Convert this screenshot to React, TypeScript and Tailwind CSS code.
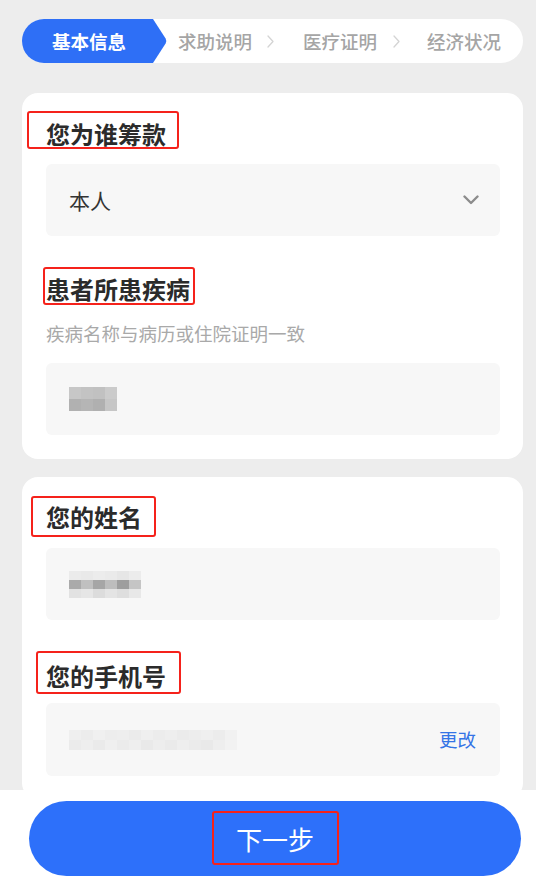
import React from 'react';

const font = { fontFamily: '"Noto Sans CJK SC", "Noto Sans", sans-serif' };

const Chevron = () => (
  <svg width="7" height="13" viewBox="0 0 7 13" fill="none" className="shrink-0">
    <path d="M1 1 L6 6.5 L1 12" stroke="#d4d4d4" strokeWidth="1.3" strokeLinecap="round" strokeLinejoin="round" />
  </svg>
);

// red annotation frame laid over a heading
const Mark = ({ className }: { className: string }) => (
  <span className={`pointer-events-none absolute rounded-[3px] border-[2.5px] border-[#f5221b] ${className}`} />
);

// pixelated (mosaic) censored value
const Mosaic = ({ rows, cell }: { rows: string[][]; cell: string }) => (
  <div className="flex flex-col">
    {rows.map((row, i) => (
      <div key={i} className="flex">
        {row.map((c, j) => (
          <div key={j} className={cell} style={{ backgroundColor: c }} />
        ))}
      </div>
    ))}
  </div>
);

const Heading = ({ text, mark }: { text: string; mark: string }) => (
  <div className="relative self-start">
    <h2 className="text-[24px] leading-[24px] font-bold text-[#2b2b2b]">{text}</h2>
    <Mark className={mark} />
  </div>
);

export default function App() {
  return (
    <div className="min-h-screen w-full bg-[#ededed] pl-[22px] pr-[13px] pt-[19px] pb-[100px]" style={font}>
      {/* Steps */}
      <div className="flex h-[44px] items-center rounded-full bg-white">
        <div className="relative flex h-full w-[145px] shrink-0 items-center pl-[30px]">
          <svg className="absolute inset-0" width="145" height="44" viewBox="0 0 145 44">
            <path
              d="M22 0 H131 L143.6 19.6 Q145 22 143.6 24.4 L131 44 H22 A22 22 0 0 1 22 0 Z"
              fill="#2e6ff6"
            />
          </svg>
          <span className="relative text-[18.5px] font-bold leading-none text-white">基本信息</span>
        </div>
        <span className="ml-[11px] text-[18.5px] font-medium leading-none text-[#a5a5a5]">求助说明</span>
        <span className="ml-[15px]"><Chevron /></span>
        <span className="ml-[29px] text-[18.5px] font-medium leading-none text-[#a5a5a5]">医疗证明</span>
        <span className="ml-[16px]"><Chevron /></span>
        <span className="ml-[27px] text-[18.5px] font-medium leading-none text-[#a5a5a5]">经济状况</span>
      </div>

      {/* Card 1 */}
      <div className="mt-[30px] flex flex-col rounded-[16px] bg-white pl-[24px] pr-[23px] pt-[29px] pb-[24px]">
        <Heading text="您为谁筹款" mark="-left-[19px] -top-[11px] h-[38px] w-[152px]" />
        <div className="mt-[18px] flex h-[72px] items-center justify-between rounded-[6px] bg-[#f7f7f7] pl-[23px] pr-[21px]">
          <span className="text-[21px] leading-none text-[#333333]">本人</span>
          <svg width="16" height="10" viewBox="0 0 16 10" fill="none">
            <path d="M1.5 1.5 L8 8 L14.5 1.5" stroke="#8c8c8c" strokeWidth="2.4" strokeLinecap="round" strokeLinejoin="round" />
          </svg>
        </div>

        <div className="mt-[41px]">
          <Heading text="患者所患疾病" mark="-left-[3px] -top-[10px] h-[38px] w-[152px]" />
        </div>
        <p className="mt-[23px] text-[18.5px] leading-[19px] text-[#a9a9a9]">疾病名称与病历或住院证明一致</p>
        <div className="mt-[20px] flex h-[72px] items-center rounded-[6px] bg-[#f7f7f7] pl-[23px]">
          <Mosaic
            cell="h-[12px] w-[12px]"
            rows={[
              ['#c7c7c7', '#c3c3c3', '#c1c1c1', '#cbcbcb'],
              ['#b1b1b1', '#b5b5b5', '#b0b0b0', '#c6c6c6'],
            ]}
          />
        </div>
      </div>

      {/* Card 2 */}
      <div className="mt-[18px] flex flex-col rounded-[16px] bg-white pl-[24px] pr-[23px] pt-[28px] pb-[23px]">
        <Heading text="您的姓名" mark="-left-[15px] -top-[9px] h-[41px] w-[125px]" />
        <div className="mt-[19px] flex h-[72px] items-center rounded-[6px] bg-[#f7f7f7] pl-[23px]">
          <Mosaic
            cell="h-[9px] w-[12px]"
            rows={[
              ['#ebebeb', '#e9e9e9', '#ececec', '#eaeaea', '#e6e6e6', '#ececec'],
              ['#aaaaaa', '#c0c0c0', '#a6a6a6', '#bdbdbd', '#9e9e9e', '#c5c5c5'],
              ['#e2e2e2', '#e6e6e6', '#dcdcdc', '#e4e4e4', '#dedede', '#e8e8e8'],
            ]}
          />
        </div>

        <div className="mt-[44px]">
          <Heading text="您的手机号" mark="-left-[10px] -top-[13px] h-[43px] w-[145px]" />
        </div>
        <div className="mt-[15px] flex h-[73px] items-center justify-between rounded-[6px] bg-[#f7f7f7] pl-[23px] pr-[24px]">
          <Mosaic
            cell="h-[10px] w-[12px]"
            rows={[
              ['#efefef', '#ececec', '#f0f0f0', '#ededed', '#eeeeee', '#ebebeb', '#efefef', '#ececec', '#eeeeee', '#ebebeb', '#ededed', '#efefef', '#ececec', '#f1f1f1'],
              ['#ebebeb', '#eeeeee', '#eaeaea', '#efefef', '#ebebeb', '#eeeeee', '#e9e9e9', '#ededed', '#eaeaea', '#eeeeee', '#ebebeb', '#e9e9e9', '#eeeeee', '#f2f2f2'],
            ]}
          />
          <span className="text-[18.5px] leading-none text-[#3474e6]">更改</span>
        </div>
      </div>

      {/* Bottom action bar */}
      <div className="fixed inset-x-0 bottom-0 h-[89px] bg-white pl-[29px] pr-[15px] pt-[11px]">
        <button className="flex h-[75px] w-full items-center justify-center rounded-full bg-[#2d70fa]">
          <span className="relative text-[26px] leading-[26px] text-white">
            下一步
            <Mark className="-left-[24px] -top-[15px] h-[54px] w-[127px]" />
          </span>
        </button>
      </div>
    </div>
  );
}
